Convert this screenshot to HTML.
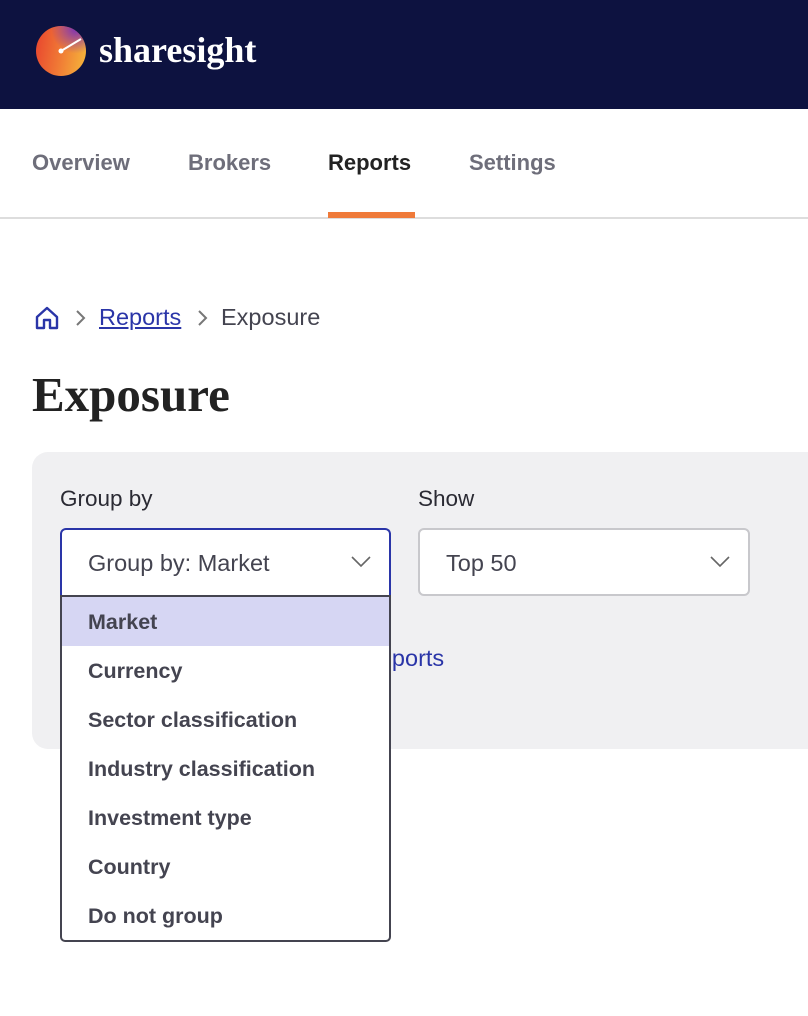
<!DOCTYPE html>
<html><head><style>
*{box-sizing:border-box;margin:0;padding:0}
body{width:808px;height:1016px;background:#fff;font-family:"Liberation Sans",sans-serif;position:relative;overflow:hidden}
.hdr{position:absolute;left:0;top:0;width:808px;height:109px;background:#0d1240}
.logo{position:absolute;left:36px;top:26px;width:50px;height:50px;border-radius:50%;background:linear-gradient(100deg,#e8432e 0%,#f07a35 50%,#f6b93b 100%);overflow:hidden}
.brand{position:absolute;left:99px;top:29px;color:#fff;font-family:"Liberation Serif",serif;font-weight:bold;font-size:36px}
.nav{position:absolute;top:150px;font-size:22px;font-weight:bold;color:#6e6e7a}
.navline{position:absolute;left:0;top:217px;width:808px;height:2px;background:#ddd}
.ul{position:absolute;left:328px;top:212px;width:87px;height:6px;background:#ef7a3a}
.bc{position:absolute;top:304px;font-size:23.5px;color:#444450}
.title{position:absolute;left:32px;top:366px;font-family:"Liberation Serif",serif;font-weight:bold;font-size:49px;color:#222}
.panel{position:absolute;left:32px;top:452px;width:800px;height:297px;background:#f0f0f2;border-radius:16px}
.lbl{position:absolute;top:486px;font-size:22.5px;color:#2a2a33}
.sel{position:absolute;top:528px;height:68px;background:#fff;border-radius:6px;font-size:23.5px;color:#444450;padding:20px 0 0 26px}
.chev{position:absolute;right:18px;top:26px}
.list{position:absolute;left:60px;top:595px;width:331px;height:347px;background:#fff;border:2px solid #444450;border-radius:0 0 5px 5px}
.it{height:49px;padding-left:26px;font-weight:bold;font-size:21.5px;color:#444450;line-height:50px}
</style></head><body>
<div class="hdr">
<div class="logo"><svg width="50" height="50" style="position:absolute;left:0;top:0"><defs><radialGradient id="p" cx="0.8" cy="0.05" r="0.5"><stop offset="0" stop-color="#7b2fb8"/><stop offset="1" stop-color="#7b2fb8" stop-opacity="0"/></radialGradient></defs><rect width="50" height="50" fill="url(#p)"/><line x1="25" y1="25" x2="45" y2="13" stroke="#fff" stroke-width="2"/><circle cx="25" cy="25" r="2.5" fill="#fff"/></svg></div>
<div class="brand">sharesight</div>
</div>
<div class="nav" style="left:32px">Overview</div>
<div class="nav" style="left:188px">Brokers</div>
<div class="nav" style="left:328px;color:#222">Reports</div>
<div class="nav" style="left:469px">Settings</div>
<div class="navline"></div><div class="ul"></div>
<svg style="position:absolute;left:34px;top:305px" width="26" height="26" viewBox="0 0 26 26"><path d="M3 12 L13 3 L23 12 V23 H16 V15 H10 V23 H3Z" fill="none" stroke="#2a35a8" stroke-width="2.4" stroke-linejoin="round"/></svg>
<svg style="position:absolute;left:75px;top:309px" width="12" height="18"><path d="M2 2 L9 9 L2 16" fill="none" stroke="#777" stroke-width="2"/></svg>
<div class="bc" style="left:99px;color:#2a35a8;text-decoration:underline">Reports</div>
<svg style="position:absolute;left:197px;top:309px" width="12" height="18"><path d="M2 2 L9 9 L2 16" fill="none" stroke="#777" stroke-width="2"/></svg>
<div class="bc" style="left:221px">Exposure</div>
<div class="title">Exposure</div>
<div class="panel"></div>
<div class="lbl" style="left:60px">Group by</div>
<div class="lbl" style="left:418px">Show</div>
<div style="position:absolute;left:314px;top:645px;font-size:23.5px;color:#2a35a8">View reports</div>
<div class="sel" style="left:60px;width:331px;border:2px solid #2a35a8;border-bottom:none;border-radius:6px 6px 0 0">Group by: Market<svg class="chev" width="20" height="12"><path d="M1 1 L10 10 L19 1" fill="none" stroke="#666" stroke-width="1.6"/></svg></div>
<div class="sel" style="left:418px;width:332px;border:2px solid #c8c8cc">Top 50<svg class="chev" width="20" height="12"><path d="M1 1 L10 10 L19 1" fill="none" stroke="#666" stroke-width="1.6"/></svg></div>
<div class="list">
<div class="it" style="background:#d6d6f3">Market</div>
<div class="it">Currency</div>
<div class="it">Sector classification</div>
<div class="it">Industry classification</div>
<div class="it">Investment type</div>
<div class="it">Country</div>
<div class="it">Do not group</div>
</div>
</body></html>
